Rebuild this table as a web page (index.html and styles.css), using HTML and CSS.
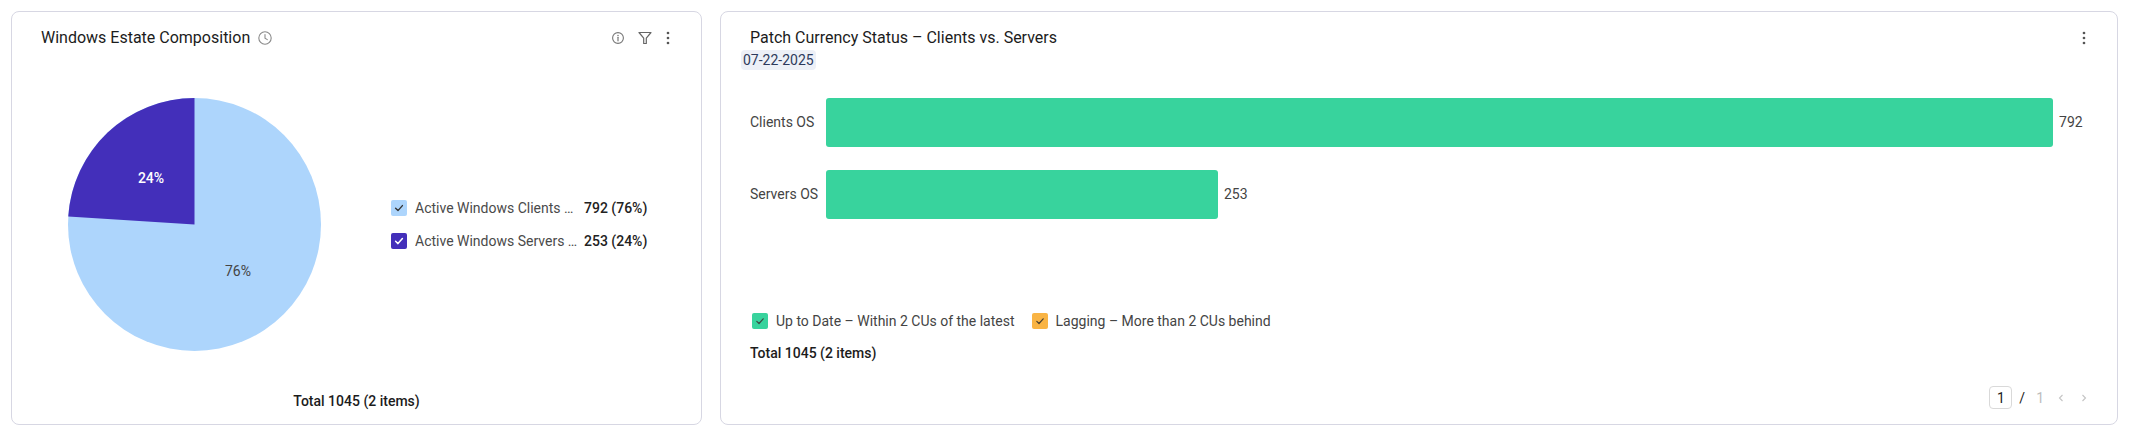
FILE: index.html
```html
<!DOCTYPE html>
<html lang="en">
<head>
<meta charset="utf-8">
<title>Dashboard</title>
<link rel="stylesheet" href="styles.css">
</head>
<body>
<div class="page">
  <section class="card card-pie">
    <header class="card-head">
      <div class="title-wrap">
        <h2 class="card-title">Windows Estate Composition</h2>
        <svg class="ico-clock" width="16" height="16" viewBox="0 0 16 16"><circle cx="8" cy="8" r="6.2" fill="none" stroke="#8a8a8a" stroke-width="1.1"/><path d="M8 4.6V8.2L10.3 9.6" fill="none" stroke="#8a8a8a" stroke-width="1.1" stroke-linecap="round"/></svg>
      </div>
      <div class="head-tools">
        <svg class="ico-info" width="14" height="14" viewBox="0 0 14 14"><circle cx="7" cy="7" r="5.4" fill="none" stroke="#777" stroke-width="1.1"/><path d="M7 6.3V9.8" stroke="#777" stroke-width="1.2" stroke-linecap="round"/><circle cx="7" cy="4.4" r="0.75" fill="#777"/></svg>
        <svg class="ico-filter" width="16" height="16" viewBox="0 0 16 16"><path d="M2 2.5H14L9.3 8.2V13.5H6.7V8.2Z" fill="none" stroke="#666" stroke-width="1.2" stroke-linejoin="round"/></svg>
        <svg class="ico-kebab" width="8" height="16" viewBox="0 0 8 16"><circle cx="4" cy="3" r="1.35" fill="#555"/><circle cx="4" cy="8" r="1.35" fill="#555"/><circle cx="4" cy="13" r="1.35" fill="#555"/></svg>
      </div>
    </header>
    <div class="pie-body">
      <svg class="pie" width="253" height="253" viewBox="0 0 253 253">
        <circle cx="126.5" cy="126.5" r="126.5" fill="#ADD5FC"/>
        <path d="M126.5 126.5L126.5 0A126.5 126.5 0 0 0 0.25 118.56Z" fill="#432FBA"/>
        <text x="83" y="80" class="pie-lbl pie-lbl-dark">24%</text>
        <text x="170" y="173" class="pie-lbl pie-lbl-light">76%</text>
      </svg>
      <ul class="pie-legend">
        <li class="leg-row">
          <span class="chk chk-blue"><svg width="16" height="16" viewBox="0 0 16 16"><path d="M4.6 8.3L7 10.6L11.4 5.6" fill="none" stroke="#333" stroke-width="1.4" stroke-linecap="round" stroke-linejoin="round"/></svg></span>
          <span class="leg-name">Active Windows Clients …</span>
          <span class="leg-val">792 (76%)</span>
        </li>
        <li class="leg-row">
          <span class="chk chk-purple"><svg width="16" height="16" viewBox="0 0 16 16"><path d="M4.6 8.3L7 10.6L11.4 5.6" fill="none" stroke="#fff" stroke-width="1.5" stroke-linecap="round" stroke-linejoin="round"/></svg></span>
          <span class="leg-name">Active Windows Servers …</span>
          <span class="leg-val">253 (24%)</span>
        </li>
      </ul>
    </div>
    <footer class="pie-total">Total 1045 (2 items)</footer>
  </section>

  <section class="card card-bar">
    <header class="card-head">
      <h2 class="card-title">Patch Currency Status – Clients vs. Servers</h2>
      <div class="head-tools">
        <svg class="ico-kebab" width="8" height="16" viewBox="0 0 8 16"><circle cx="4" cy="3" r="1.35" fill="#555"/><circle cx="4" cy="8" r="1.35" fill="#555"/><circle cx="4" cy="13" r="1.35" fill="#555"/></svg>
      </div>
    </header>
    <div class="date-row"><span class="date-badge">07-22-2025</span></div>
    <div class="bars">
      <div class="bar-row">
        <span class="bar-label">Clients OS</span>
        <div class="bar-track">
          <div class="bar" style="width: 97.23%"></div>
          <span class="bar-val">792</span>
        </div>
      </div>
      <div class="bar-row">
        <span class="bar-label">Servers OS</span>
        <div class="bar-track">
          <div class="bar" style="width: 31.06%"></div>
          <span class="bar-val">253</span>
        </div>
      </div>
    </div>
    <ul class="bar-legend">
      <li class="leg-item">
        <span class="chk chk-green"><svg width="16" height="16" viewBox="0 0 16 16"><path d="M4.8 8.4L7 10.5L11.2 5.8" fill="none" stroke="#3b4a44" stroke-width="1.2" stroke-linecap="round" stroke-linejoin="round"/></svg></span>
        <span class="leg-text">Up to Date – Within 2 CUs of the latest</span>
      </li>
      <li class="leg-item">
        <span class="chk chk-orange"><svg width="16" height="16" viewBox="0 0 16 16"><path d="M4.8 8.4L7 10.5L11.2 5.8" fill="none" stroke="#4a4030" stroke-width="1.2" stroke-linecap="round" stroke-linejoin="round"/></svg></span>
        <span class="leg-text">Lagging – More than 2 CUs behind</span>
      </li>
    </ul>
    <div class="bar-total">Total 1045 (2 items)</div>
    <nav class="pager">
      <span class="pg-box">1</span>
      <span class="pg-sep">/</span>
      <span class="pg-total">1</span>
      <svg class="pg-arrow pg-prev" width="8" height="10" viewBox="0 0 8 10"><path d="M5.5 2L2.5 5L5.5 8" fill="none" stroke="#c4c4c4" stroke-width="1.1"/></svg>
      <svg class="pg-arrow pg-next" width="8" height="10" viewBox="0 0 8 10"><path d="M2.5 2L5.5 5L2.5 8" fill="none" stroke="#c4c4c4" stroke-width="1.1"/></svg>
    </nav>
  </section>
</div>
</body>
</html>
```

FILE: styles.css
```css
* { box-sizing: border-box; }
html, body { margin: 0; padding: 0; background: #ffffff; }
body {
  font-family: Roboto, "Liberation Sans", Arial, sans-serif;
  font-size: 14px;
  color: #333;
}
ul { list-style: none; margin: 0; padding: 0; }
h2 { margin: 0; }

.page {
  display: grid;
  grid-template-columns: 691px 1fr;
  gap: 18px;
  padding: 11px 13px 0 11px;
}

.card {
  height: 414px;
  border: 1px solid #d7d7e3;
  border-radius: 8px;
  background: #fff;
  display: flex;
  flex-direction: column;
  padding: 14px 29px 0 29px;
}

.card-head {
  height: 24px;
  display: flex;
  align-items: center;
  justify-content: space-between;
}
.title-wrap { display: flex; align-items: center; }
.card-title {
  font-size: 16px;
  font-weight: 400;
  color: #1c1c1c;
  line-height: 24px;
  white-space: nowrap;
}
.ico-clock { margin-left: 7px; display: block; }
.head-tools { display: flex; align-items: center; }
.head-tools svg { display: block; }
.ico-info { margin-right: 12px; }
.ico-filter { margin-right: 11px; }

/* pie card */
.card-pie { padding-bottom: 13px; }
.pie-body {
  flex: 1;
  display: flex;
  align-items: center;
  padding-top: 8px;
}
.pie { margin-left: 27px; display: block; flex: none; }
.pie-lbl {
  font-family: Roboto, "Liberation Sans", Arial, sans-serif;
  font-size: 14px;
  text-anchor: middle;
  dominant-baseline: central;
}
.pie-lbl-dark { fill: #ffffff; font-weight: 500; }
.pie-lbl-light { fill: #444; }

.pie-legend {
  margin-left: 70px;
  display: flex;
  flex-direction: column;
  gap: 13px;
}
.leg-row {
  display: flex;
  align-items: center;
  height: 20px;
}
.chk {
  width: 16px;
  height: 16px;
  border-radius: 2px;
  flex: none;
  display: block;
}
.chk svg { display: block; }
.chk-blue { background: #ADD5FC; }
.chk-purple { background: #432FBA; }
.chk-green { background: #38D39D; }
.chk-orange { background: #F9B444; }
.leg-name {
  width: 169px;
  margin-left: 8px;
  color: #4a4a4a;
  white-space: nowrap;
  overflow: hidden;
}
.leg-val { font-weight: 500; color: #222; white-space: nowrap; }

.pie-total {
  text-align: center;
  font-weight: 500;
  color: #1c1c1c;
  line-height: 20px;
}

/* bar card */
.card-bar { padding-bottom: 15px; }
.date-row { height: 20px; }
.date-badge {
  display: inline-block;
  margin-left: -9px;
  height: 20px;
  line-height: 20px;
  padding: 0 2px;
  border-radius: 4px;
  background: #edf0f7;
  color: #2d3a5c;
}

.bars { margin-top: 16px; }
.bar-row {
  height: 72px;
  display: flex;
  align-items: center;
}
.bar-label {
  width: 76px;
  flex: none;
  color: #444;
  white-space: nowrap;
}
.bar-track {
  flex: 1;
  display: flex;
  align-items: center;
}
.bar {
  height: 49px;
  background: #38D39D;
  border-radius: 3px;
}
.bar-val { margin-left: 6px; color: #444; }

.bar-legend {
  margin-top: 81px;
  display: flex;
  align-items: center;
  gap: 17px;
  height: 20px;
  padding-left: 2px;
}
.leg-item { display: flex; align-items: center; }
.leg-text { margin-left: 8px; color: #444; white-space: nowrap; }

.bar-total {
  margin-top: 12px;
  line-height: 20px;
  font-weight: 500;
  color: #1c1c1c;
}

.pager {
  margin-top: auto;
  display: flex;
  align-items: center;
  justify-content: flex-end;
  height: 23px;
}
.pg-box {
  width: 23px;
  height: 23px;
  border: 1px solid #d9d9d9;
  border-radius: 4px;
  display: flex;
  align-items: center;
  justify-content: center;
  color: #222;
}
.pg-sep { margin-left: 7px; color: #222; }
.pg-total { margin-left: 11px; color: #bdbdbd; }
.pg-arrow { display: block; }
.pg-prev { margin-left: 13px; }
.pg-next { margin-left: 15px; }
```
